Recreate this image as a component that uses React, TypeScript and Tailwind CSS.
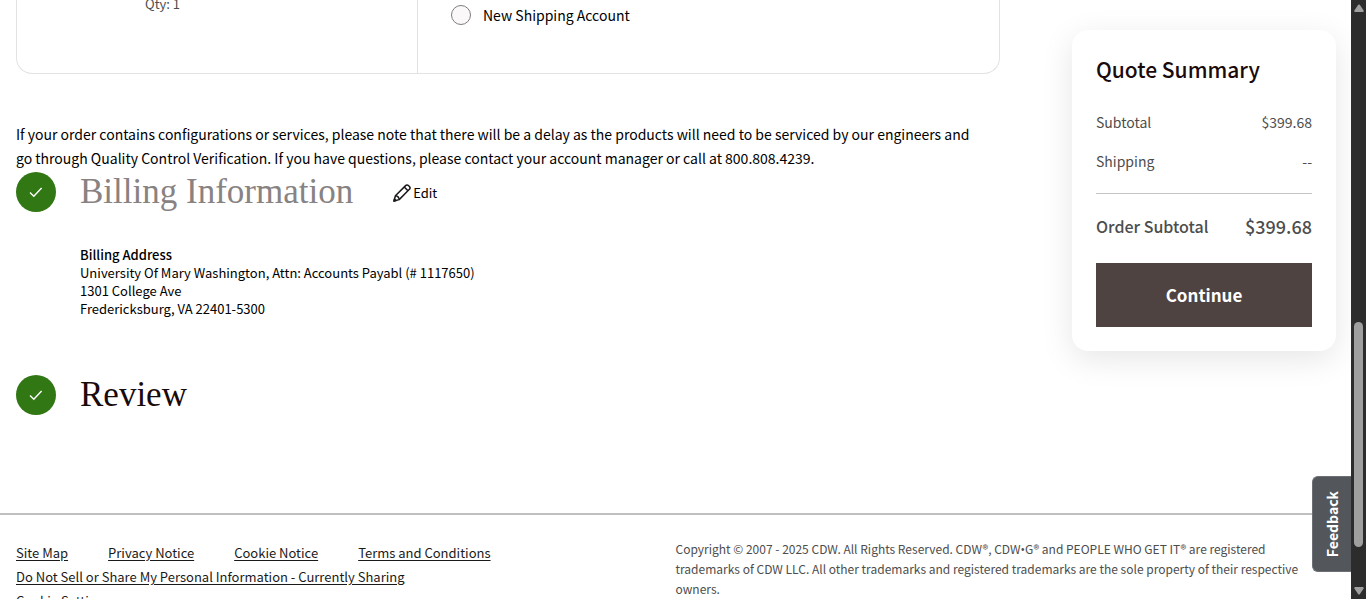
import type { ReactNode } from "react";

const footerLinks = ["Site Map", "Privacy Notice", "Cookie Notice", "Terms and Conditions"];

function StepBadge() {
  return (
    <span className="flex size-10 shrink-0 items-center justify-center rounded-full bg-[#317714]">
      <svg width="14" height="12" viewBox="0 0 14 12" fill="none" stroke="white" strokeWidth="1.4" aria-hidden="true">
        <path d="M1 6.6 4.8 10.2 12.6 2" />
      </svg>
    </span>
  );
}

function PencilIcon() {
  return (
    <svg width="18" height="18" viewBox="0 0 18 18" fill="none" stroke="#1a1a1a" strokeWidth="1.5" strokeLinejoin="round" aria-hidden="true">
      <path d="M1 17 2.4 11.8 12.6 1.6C13.4.8 14.6.7 15.4 1.5L16.4 2.5C17.3 3.4 17.2 4.5 16.4 5.3L6.2 15.6Z" />
      <path d="M11.2 3 15 6.8M2.4 11.8C4.4 12 6 13.6 6.2 15.6" />
      <path d="M1 17 1.5 15 3 16.5Z" fill="#1a1a1a" />
    </svg>
  );
}

function SummaryRow({ label, children }: { label: string; children: ReactNode }) {
  return (
    <div className="flex justify-between text-[14px] leading-[23px] text-[#4d4d4d]">
      <dt>{label}</dt>
      <dd>{children}</dd>
    </div>
  );
}

function QuoteSummary() {
  return (
    <aside className="mt-[30px] mr-[15px] w-66 shrink-0 self-start rounded-2xl bg-white p-6 shadow-[0_8px_32px_rgba(0,0,0,0.1)]">
      <h2 className="text-[21px] leading-[30px] font-medium text-[#1a0a0a]">Quote Summary</h2>
      <dl className="mt-[27px] flex flex-col gap-4">
        <SummaryRow label="Subtotal">$399.68</SummaryRow>
        <SummaryRow label="Shipping">--</SummaryRow>
      </dl>
      <div className="mt-5 flex items-center justify-between border-t border-[#c4c4c4] pt-5 font-medium text-[#4d4d4d]">
        <span className="text-[16px] leading-6">Order Subtotal</span>
        <span className="text-[18px] leading-6">$399.68</span>
      </div>
      <button type="button" className="mt-[25px] h-16 w-full bg-[#4f4342] text-[17px] font-bold text-white">
        Continue
      </button>
    </aside>
  );
}

function Scrollbar() {
  return (
    <div className="relative flex w-[15px] shrink-0 flex-col items-center justify-between bg-[#2c2c2c] py-1">
      <svg width="10" height="8" viewBox="0 0 10 8" fill="#9f9f9f" aria-hidden="true">
        <path d="M4.2.8Q5 0 5.8.8L9.6 6.5Q10 8 9 8H1Q0 8 .4 6.5Z" />
      </svg>
      <span className="absolute top-[322px] h-[225px] w-[9px] rounded-full bg-[#9f9f9f]" />
      <svg width="10" height="8" viewBox="0 0 10 8" fill="#9f9f9f" aria-hidden="true">
        <path d="M4.2 7.2Q5 8 5.8 7.2L9.6 1.5Q10 0 9 0H1Q0 0 .4 1.5Z" />
      </svg>
    </div>
  );
}

export default function App() {
  return (
    <div className="flex h-screen overflow-hidden bg-white font-['Noto_Sans_CJK_SC',sans-serif] text-black">
      <div className="relative min-w-0 flex-1 overflow-hidden">
        <div className="flex justify-between pl-4">
          <main className="min-w-0 max-w-[984px] flex-1">
            {/* Bottom of the shipping card */}
            <section className="flex h-[74px] rounded-b-2xl border border-t-0 border-[#e3e3e3]">
              <div className="-mt-1 w-[401px] border-r border-[#e3e3e3] pl-32 text-[13px] leading-4 text-[#4d4d4d]">Qty: 1</div>
              <div className="flex-1 pt-[3px] pl-[33px]">
                <label className="flex items-center gap-3 text-[14px] leading-6">
                  <input type="radio" name="account" className="size-5 appearance-none rounded-full border border-[#807c7c] bg-[#faf8f8]" />
                  New Shipping Account
                </label>
              </div>
            </section>

            <p className="mt-12 text-[14px] leading-6">
              If your order contains configurations or services, please note that there will be a delay as the products will need to be serviced by our engineers and
              <br />
              go through Quality Control Verification. If you have questions, please contact your account manager or call at 800.808.4239.
            </p>

            <section className="mt-0.5">
              <div className="flex items-center">
                <StepBadge />
                <h2 className="ml-6 font-['Liberation_Serif',serif] text-[35px] leading-10 text-[#888282]">Billing Information</h2>
                <button type="button" className="ml-10 flex items-center gap-0.5 pt-0.5 text-[13px] leading-5">
                  <PencilIcon />
                  Edit
                </button>
              </div>
              <address className="mt-[34px] ml-16 text-[13px] leading-[18px] not-italic">
                <strong className="block font-medium">Billing Address</strong>
                University Of Mary Washington, Attn: Accounts Payabl (# 1117650)
                <br />
                1301 College Ave
                <br />
                Fredericksburg, VA 22401-5300
              </address>
            </section>

            <section className="mt-[57px] flex items-center">
              <StepBadge />
              <h2 className="ml-6 font-['Liberation_Serif',serif] text-[35px] leading-10 text-[#1a0a0a]">Review</h2>
            </section>
          </main>
          <QuoteSummary />
        </div>

        <footer className="mt-[98px] flex border-t-2 border-[#c0c0c0] pt-6">
          <nav className="w-1/2 pt-0.5 pl-4 text-[13px] leading-6 text-[#1a1a1a] underline underline-offset-2">
            <div className="flex gap-10">
              {footerLinks.map((link) => (
                <a key={link} href="#">{link}</a>
              ))}
            </div>
            <a href="#" className="block">Do Not Sell or Share My Personal Information - Currently Sharing</a>
            <a href="#" className="block">Cookie Settings</a>
          </nav>
          <p className="w-1/2 text-[12px] leading-5 text-[#4d4d4d]">
            Copyright © 2007 - 2025 CDW. All Rights Reserved. CDW®, CDW<span className="font-['Open_Sans',sans-serif] leading-none">•</span>G® and PEOPLE WHO GET IT® are registered
            <br />
            trademarks of CDW LLC. All other trademarks and registered trademarks are the sole property of their respective
            <br />
            owners.
          </p>
        </footer>

        <button type="button" className="absolute top-[476px] right-0 flex h-24 w-[39px] items-center justify-center rounded-l-md border border-r-0 border-[#6c6f75] bg-[#53565b] text-[14px] font-bold text-white">
          <span className="rotate-180 [writing-mode:vertical-rl]">Feedback</span>
        </button>
      </div>
      <Scrollbar />
    </div>
  );
}
